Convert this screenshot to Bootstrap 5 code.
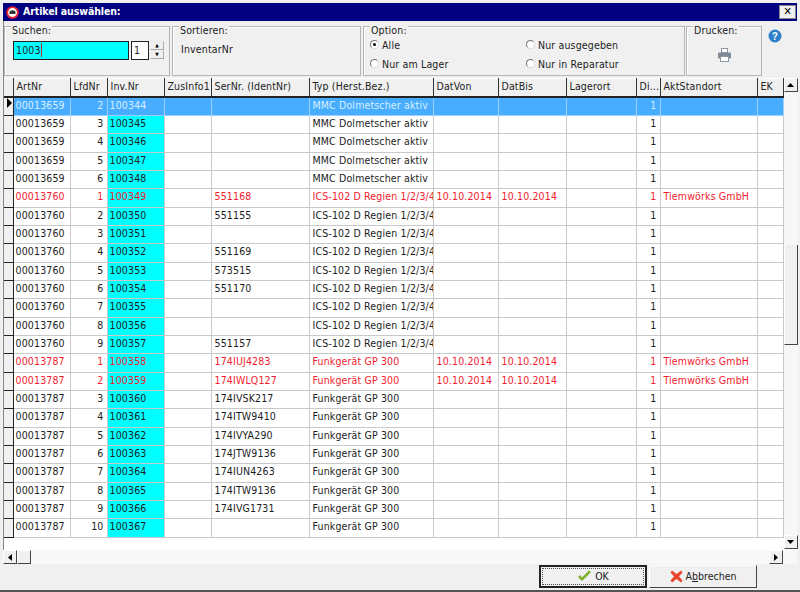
<!DOCTYPE html>
<html lang="de"><head><meta charset="utf-8"><title>Artikel auswählen</title>
<link href="https://cdn.jsdelivr.net/npm/bootstrap@5.3.0/dist/css/bootstrap.min.css" rel="stylesheet">
<style>
html,body{width:800px;height:592px;overflow:hidden;margin:0}
body{font-family:"DejaVu Sans Condensed","DejaVu Sans",sans-serif;font-size:10.5px;letter-spacing:.15px;color:#1c1c1c;background:#f0f0f0}
.win{width:800px;height:592px;padding:3px 3px 0;border-bottom:2px solid #555;background:#f0f0f0}
.tbar{height:18px;background:#000080;color:#fff;font-weight:700;font-size:10.5px;letter-spacing:-.1px;padding:0 1px 0 3px;flex:none}
.closex{width:17px;height:14px;background:#f0f0f0;border:1px solid #888;color:#000;font-size:11px;line-height:12px;text-align:center;font-weight:700}
.tools{height:57px;padding:5px 0 0;border-left:1px solid #888;flex:none}
.grp{border:1px solid #b5b5b5;box-shadow:inset 1px 1px #fff;height:50px;position:relative;flex:none}
.cap{position:absolute;left:6px;top:-2px;line-height:11px;padding:0 1px;background:#f0f0f0}
.g1{width:166px;padding:14px 0 0 8px}.g2{width:189px;margin-left:2px;padding:15px 0 0 8px;line-height:15px}.g3{width:322px;margin-left:2px;padding:12px 0 0 6px}.g4{width:76px;margin-left:1px;padding-top:21px}
.inp{width:116px;height:19px;background:#0ff;border:1px solid #222;padding:0 2px;line-height:17px}
.caret{display:inline-block;width:1px;height:14px;background:#a33;vertical-align:-3px}
.num{width:18px;height:19px;background:#fff;border:1px solid #222;margin-left:2px;padding:0 2px;line-height:17px}
.spin{width:14px;height:19px;margin-left:1px}
.spin i{display:block;height:9px;border:1px solid #aaa;border-top-color:#eee;border-left-color:#eee;text-align:center;font-size:5px;line-height:7px;font-style:normal;color:#000}
.rad{display:inline-block;width:9px;height:9px;border-radius:50%;border:1px solid #777;border-bottom-color:#ddd;border-right-color:#ddd;background:#fff;margin-right:3px;position:relative}
.rad.on::after{content:"";position:absolute;left:2px;top:2px;width:3px;height:3px;border-radius:50%;background:#000}
.optcols{display:grid;grid-template-columns:156px 1fr;row-gap:7px}
.optcols>div{line-height:12px;white-space:nowrap}
.helpb{padding:3px 0 0 6px}
.gridbox{height:472px;border-left:1px solid #888;background:#fff;flex:none}
.tbl{table-layout:fixed;width:779px;margin:0;border-collapse:collapse;--bs-table-bg:transparent;color:#1c1c1c;font-size:10.5px}
.tbl th,.tbl td{padding:0 2px 0 3px;overflow:hidden;white-space:nowrap;border:0;border-right:1px solid #c9c9c9;border-bottom:1px solid #c9c9c9;height:18.35px;line-height:15px;font-weight:400;box-shadow:none}
.tbl th{height:18px;padding-bottom:2px;background:#f0f0f0;color:#222;border-right:1px solid #333;border-bottom:2px solid #222;border-top:1px solid #fff}
.tbl td.first{padding-left:2px}
.tbl td.ind{background:#f0f0f0;border-right:1px solid #222;border-bottom:1px solid #222;padding:0}
.tbl th.ind{padding:0}
.tbl td.r{text-align:right;padding-right:3px}
.tbl td.inv{background:#0ff;padding-left:2px}
.tbl tr.red td{color:#f21c2e}
.tbl tr.sel td{background:#48adff;color:#d8eeff;border-color:#9ccfff}
.tbl tr.sel td.ind{background:#f0f0f0;border-right-color:#222;border-bottom-color:#222}
.arrow{display:block;width:0;height:0;border-left:5px solid #000;border-top:5px solid transparent;border-bottom:5px solid transparent;margin-left:3px}
.vbar{width:14px;background:#f7f7f7;flex:none;height:471px}
.sbtn{height:14px;width:14px;background:#f0f0f0;border:1px solid #fff;border-right-color:#444;border-bottom-color:#444;display:flex;align-items:center;justify-content:center;flex:none}
.arrr{margin-right:14px}
.thumb{width:14px;height:100px;background:#f0f0f0;border-right:1px solid #444;border-bottom:1px solid #444;border-left:1px solid #fff;margin-top:153px}
.hbar{height:14px;background:#f8f8f8;flex:none}
.foot{height:26px;padding-top:1px}
.wbtn{height:23px;font-size:10.5px;color:#222;background:#f0f0f0;display:flex;align-items:center;justify-content:center;gap:3px}
.okb{width:108px;border:2px solid #222;outline:1px dotted #555;outline-offset:-4px}
.cb{width:108px;border:1px solid #fff;border-right:1px solid #444;border-bottom:1px solid #444;margin-left:2px;margin-right:40px}
.sv{display:block;flex:none}
</style></head><body>
<div class="win d-flex flex-column">
<div class="tbar d-flex align-items-center">
<svg class="sv me-1" width="13" height="13" viewBox="0 0 13 13"><circle cx="6.5" cy="6.5" r="6.3" fill="#e8263a"/><circle cx="6.5" cy="6.5" r="4.4" fill="#fff"/><path d="M3.5 8V6.2C3.5 5 5 4.3 6.5 4.3S9.5 5 9.5 6.2V8z" fill="#333"/></svg>
<span>Artikel auswählen:</span>
<span class="closex ms-auto">✕</span></div>
<div class="tools d-flex">
<div class="grp g1"><span class="cap">Suchen:</span><div class="d-flex"><div class="inp">1003<span class="caret"></span></div><div class="num">1</div><div class="spin"><i>▲</i><i>▼</i></div></div></div>
<div class="grp g2"><span class="cap">Sortieren:</span>InventarNr</div>
<div class="grp g3"><span class="cap">Option:</span><div class="optcols">
<div><span class="rad on"></span>Alle</div><div><span class="rad"></span>Nur ausgegeben</div>
<div><span class="rad"></span>Nur am Lager</div><div><span class="rad"></span>Nur in Reparatur</div></div></div>
<div class="grp g4"><span class="cap">Drucken:</span><div class="d-flex justify-content-center">
<svg class="sv" width="15" height="14" viewBox="0 0 15 14"><rect x="4.5" y=".5" width="6" height="4" fill="#fff" stroke="#8a97a3"/><rect x="1" y="4.5" width="13" height="6" rx="1" fill="#7f8c97"/><rect x="3.5" y="8.500" width="8" height="5" fill="#fff" stroke="#8a97a3"/></svg></div></div>
<div class="helpb"><svg class="sv" width="14" height="14" viewBox="0 0 14 14"><circle cx="7" cy="7" r="6.5" fill="#2f7fc8"/><text x="7" y="10.5" font-size="10" font-weight="700" fill="#fff" text-anchor="middle" font-family="Liberation Sans">?</text></svg></div>
</div>
<div class="gridbox d-flex">
<table class="table tbl align-self-start"><colgroup id="cg"></colgroup><thead><tr id="hd"></tr></thead><tbody id="bd"></tbody></table>
<div class="vbar d-flex flex-column">
<div class="sbtn"><svg width="7" height="4"><path d="M3.5 0L7 4H0z"/></svg></div>
<div class="thumb"></div>
<div class="sbtn mt-auto"><svg width="7" height="4"><path d="M3.5 4L7 0H0z"/></svg></div></div>
</div>
<div class="hbar d-flex justify-content-between">
<div class="d-flex"><div class="sbtn"><svg width="4" height="7"><path d="M0 3.5L4 0V7z"/></svg></div><div class="sbtn"></div></div>
<div class="sbtn arrr"><svg width="4" height="7"><path d="M4 3.5L0 0V7z"/></svg></div></div>
<div class="foot d-flex justify-content-end">
<button type="button" class="btn p-0 rounded-0 wbtn okb"><svg class="sv" width="15" height="13" viewBox="0 0 15 13"><path d="M1 7l4 4 9-9-2-1.5L5 7.5 3 5z" fill="#7fae2b"/></svg>OK</button>
<button type="button" class="btn p-0 rounded-0 wbtn cb"><svg class="sv" width="13" height="13" viewBox="0 0 13 13"><path d="M2 .5L6.5 4 11 .5l1.5 2L9 6.5l3.5 4-1.5 2L6.5 9 2 12.5l-1.5-2L4 6.5 .5 2.5z" fill="#e8452c"/></svg><span>A<u>b</u>brechen</span></button>
</div>
</div>
<script>
const W=[9,57,37,57,47,98,124,65,68,70,24,97,26];
const H=['','ArtNr','LfdNr','Inv.Nr','ZusInfo1','SerNr. (IdentNr)','Typ (Herst.Bez.)','DatVon','DatBis','Lagerort','Di...','AktStandort','EK'];
document.getElementById('cg').innerHTML=W.map(w=>`<col style="width:${w}px">`).join('');
document.getElementById('hd').innerHTML=H.map((h,i)=>`<th class="${i?'':'ind'}">${h}</th>`).join('');
const M='MMC Dolmetscher aktiv',I='ICS-102 D Regien 1/2/3/4',F='Funkgerät GP 300',D='10.10.2014',T='Tiemwörks GmbH';
const R=[['00013659',2,100344,'',M,0,'sel'],['00013659',3,100345,'',M],['00013659',4,100346,'',M],['00013659',5,100347,'',M],['00013659',6,100348,'',M],
['00013760',1,100349,'551168',I,1],['00013760',2,100350,'551155',I],['00013760',3,100351,'',I],['00013760',4,100352,'551169',I],['00013760',5,100353,'573515',I],['00013760',6,100354,'551170',I],['00013760',7,100355,'',I],['00013760',8,100356,'',I],['00013760',9,100357,'551157',I],
['00013787',1,100358,'174IUJ4283',F,1],['00013787',2,100359,'174IWLQ127',F,1],['00013787',3,100360,'174IVSK217',F],['00013787',4,100361,'174ITW9410',F],['00013787',5,100362,'174IVYA290',F],['00013787',6,100363,'174JTW9136',F],['00013787',7,100364,'174IUN4263',F],['00013787',8,100365,'174ITW9136',F],['00013787',9,100366,'174IVG1731',F],['00013787',10,100367,'',F]];
document.getElementById('bd').innerHTML=R.map(r=>{const red=r[5]?'red':'',d=r[5]?D:'',t=r[5]?T:'';
return `<tr class="${red} ${r[6]||''}"><td class="ind">${r[6]?'<span class="arrow"></span>':''}</td><td class="first">${r[0]}</td><td class="r">${r[1]}</td><td class="inv">${r[2]}</td><td></td><td>${r[3]}</td><td>${r[4]}</td><td>${d}</td><td>${d}</td><td></td><td class="r">1</td><td>${t}</td><td></td></tr>`}).join('');
</script>
<script src="https://cdn.jsdelivr.net/npm/bootstrap@5.3.0/dist/js/bootstrap.bundle.min.js"></script>
</body></html>
